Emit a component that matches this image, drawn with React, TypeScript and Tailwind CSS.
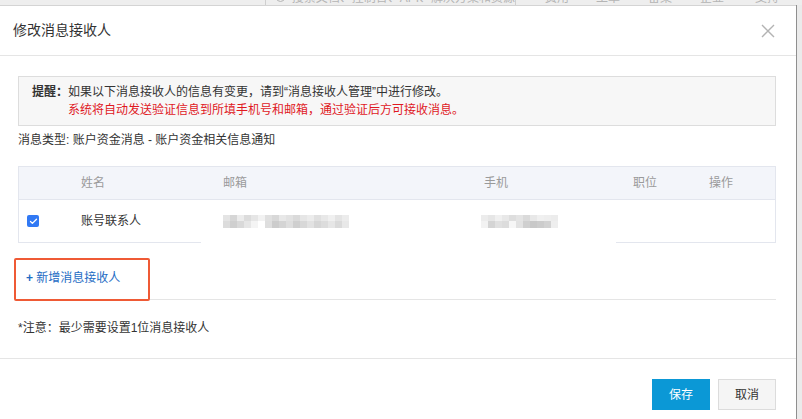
import { Check } from 'lucide-react'

const FONT = { fontFamily: '"Liberation Sans", "Noto Sans CJK SC", sans-serif' }

// gray shades for the redacted email / phone cells
const EMAIL_CELLS = [
  ['#e4e4e4', '#d6d6d6', '#ececec', '#dcdcdc', '#e6e6e6', '#f2f2f2', '#e0e0e0', '#d8d8d8', '#e8e8e8', '#e2e2e2', '#dadada', '#e6e6e6', '#ececec', '#e0e0e0', '#e8e8e8', '#f0f0f0', '#e4e4e4', '#ececec'],
  ['#dcdcdc', '#cfcfcf', '#d9d9d9', '#e6e6e6', '#f4f4f4', '#ffffff', '#dedede', '#cccccc', '#d4d4d4', '#dedede', '#cfcfcf', '#d8d8d8', '#e2e2e2', '#d6d6d6', '#dcdcdc', '#e6e6e6', '#dadada', '#e8e8e8'],
]
const PHONE_CELLS = [
  ['#ececec', '#e6e6e6', '#f0f0f0', '#e8e8e8', '#dedede', '#e4e4e4', '#dadada', '#e8e8e8', '#f0f0f0', '#eeeeee', '#ececec'],
  ['#f2f2f2', '#d4d4d4', '#e0e0e0', '#dcdcdc', '#f6f6f6', '#e2e2e2', '#cfcfcf', '#c8c8c8', '#cccccc', '#d2d2d2', '#eeeeee'],
]

function Mosaic({ rows }: { rows: string[][] }) {
  return (
    <div className="flex flex-col">
      {rows.map((row, i) => (
        <div key={i} className="flex">
          {row.map((c, j) => (
            <div key={j} className="w-[7px] h-[6.5px]" style={{ backgroundColor: c }} />
          ))}
        </div>
      ))}
    </div>
  )
}

// console top bar peeking out above the dialog
function BackdropStrip() {
  return (
    <div className="h-[5px] overflow-hidden bg-[#eeeeee]">
      <div className="-mt-[10px] h-[15px] flex items-center text-[12px] text-[#b5b5b5] whitespace-nowrap">
        <div className="ml-[265px] w-[251px] h-[15px] border-l border-r border-[#cfcfcf] flex items-center">
          <span className="ml-[10px] w-[9px] h-[9px] rounded-full border border-[#b5b5b5]" />
          <span className="ml-[7px]">搜索文档、控制台、API、解决方案和资源</span>
        </div>
        <span className="ml-[29px]">费用</span>
        <span className="ml-[27px]">工单</span>
        <span className="ml-[28px]">备案</span>
        <span className="ml-[28px]">企业</span>
        <span className="ml-[31px]">支持</span>
      </div>
    </div>
  )
}

export default function App() {
  return (
    <div className="w-[802px] h-[419px] overflow-hidden bg-[#eeeeee] flex flex-col" style={FONT}>
      <BackdropStrip />
      <div className="flex flex-1">
        <div className="w-[796px] bg-white border-t border-[#d4d4d4] flex flex-col">
          {/* header */}
          <div className="h-[50px] border-b border-[#e5e5e5] flex items-center justify-between pl-[13px] pr-[21px]">
            <h1 className="text-[14px] text-[#333]">修改消息接收人</h1>
            <svg width="14" height="14" viewBox="0 0 14 14" className="text-[#b3b3b3]">
              <path d="M1 1L13 13M13 1L1 13" stroke="currentColor" strokeWidth="1.4" />
            </svg>
          </div>

          {/* body */}
          <div className="pl-[18px] pr-[20px] pt-[20px] pb-[22px] border-b border-[#e5e5e5] text-[12px]">
            <div className="bg-[#f7f7f7] border border-[#dddddd] pl-[13px] py-[6px] flex leading-[18px]">
              <span className="font-bold text-[#333]">提醒：</span>
              <div>
                <p className="text-[#333]">如果以下消息接收人的信息有变更，请到“消息接收人管理”中进行修改。</p>
                <p className="text-[#e0191f]">系统将自动发送验证信息到所填手机号和邮箱，通过验证后方可接收消息。</p>
              </div>
            </div>

            <p className="mt-[6px] leading-[16px] text-[#333]">消息类型: 账户资金消息 - 账户资金相关信息通知</p>

            {/* recipients table */}
            <div className="relative mt-[18px] border border-[#e3e6ee]">
              <div className="h-[33px] bg-[#f3f5fa] border-b border-[#e3e6ee] grid grid-cols-[62px_142px_261px_149px_76px_1fr] items-center text-[#9a9a9a]">
                <span />
                <span>姓名</span>
                <span>邮箱</span>
                <span>手机</span>
                <span>职位</span>
                <span>操作</span>
              </div>
              <div className="h-[42px] grid grid-cols-[62px_142px_261px_149px_76px_1fr] items-center text-[#333]">
                <span className="pl-[8px] flex">
                  <span className="w-[12px] h-[12px] rounded-[2px] bg-[#3179f4] flex items-center justify-center">
                    <Check size={9} strokeWidth={3.5} className="text-white" />
                  </span>
                </span>
                <span>账号联系人</span>
                <Mosaic rows={EMAIL_CELLS} />
                <span className="-ml-[3px]">
                  <Mosaic rows={PHONE_CELLS} />
                </span>
                <span />
                <span />
              </div>
              {/* redaction patch over the bottom rule */}
              <div className="absolute left-[182px] -bottom-[1px] w-[415px] h-[2px] bg-white" />
            </div>

            {/* add recipient */}
            <div className="relative h-[57px] pt-[27px] border-b border-[#e5e5e5]">
              <a className="block pl-[8px] leading-[16px] text-[#1e6cc4]">
                <span className="font-bold">+</span> 新增消息接收人
              </a>
              <div className="absolute -left-[4px] top-[15px] w-[136px] h-[43px] border-2 border-[#ef5a35] rounded-[2px]" />
            </div>

            <p className="mt-[20px] leading-[16px] text-[#333]">*注意：最少需要设置1位消息接收人</p>
          </div>

          {/* footer */}
          <div className="flex justify-end gap-[8px] pt-[20px] pr-[20px] text-[12px]">
            <button className="w-[58px] h-[31px] bg-[#0b98d6] text-white">保存</button>
            <button className="w-[58px] h-[31px] bg-[#f5f5f5] border border-[#dcdcdc] text-[#333]">取消</button>
          </div>
        </div>
        <div className="flex-1 border-l border-[#8f8f8f] bg-[#ebebeb]" />
      </div>
    </div>
  )
}
